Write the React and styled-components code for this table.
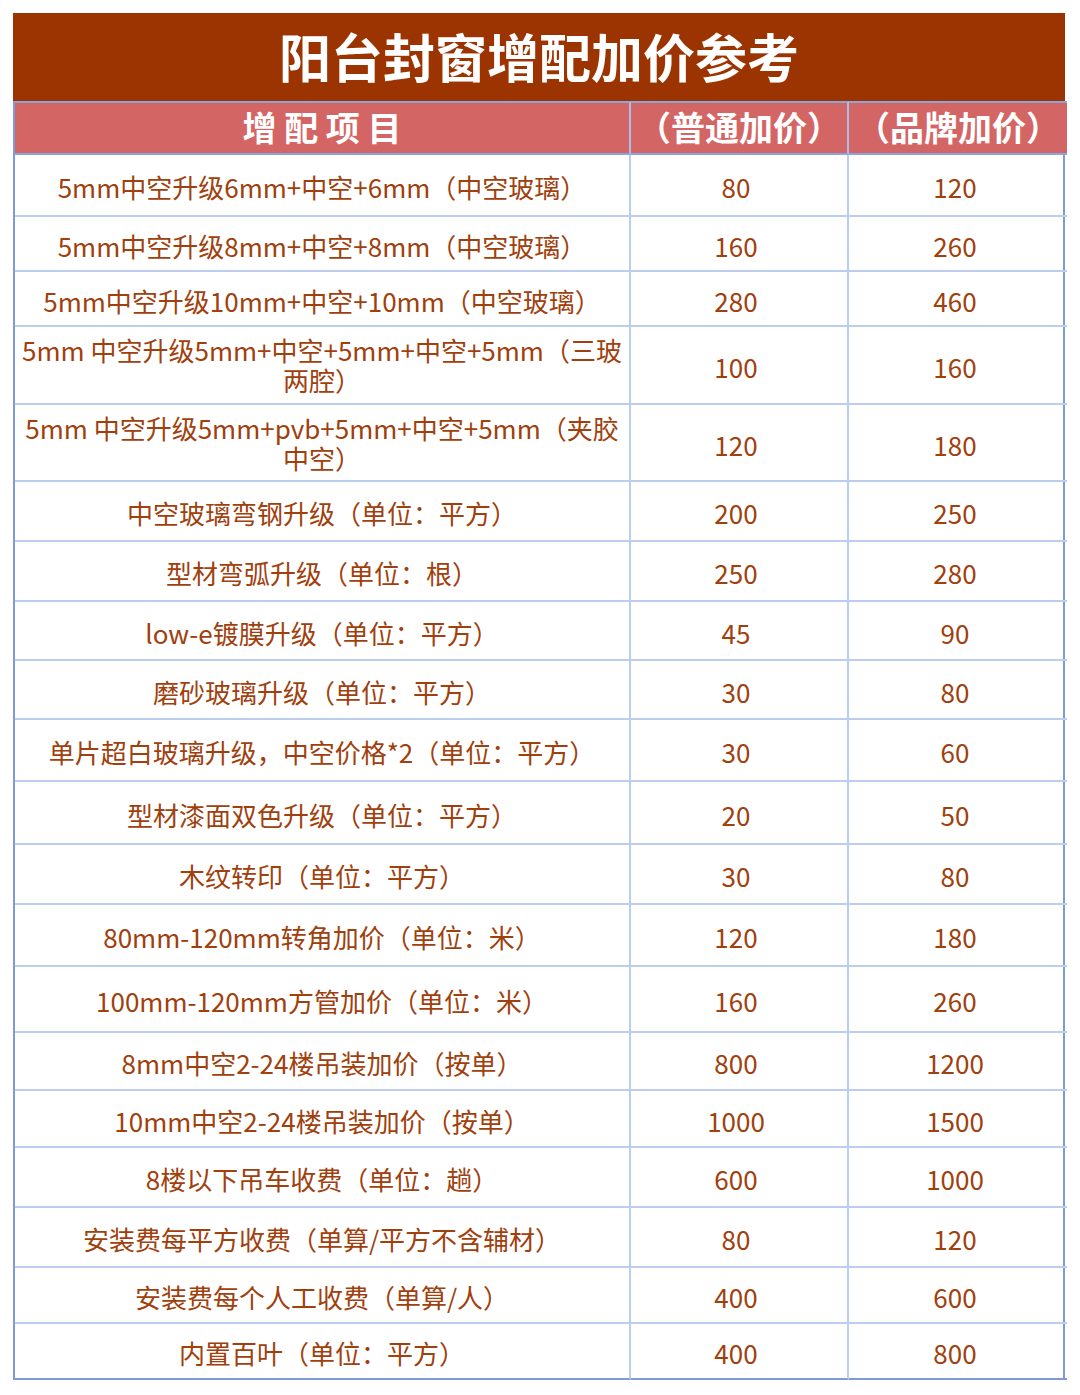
import styled, { createGlobalStyle } from "styled-components"

const GlobalStyle = createGlobalStyle`
    html, body {
        margin: 0;
        padding: 0;
        background: #ffffff;
    }
    body {
        font-family: "Noto Sans CJK SC", "Noto Sans", sans-serif;
    }
`

const rows = [
    { name: "5mm中空升级6mm+中空+6mm（中空玻璃）", a: "80", b: "120", h: 62 },
    { name: "5mm中空升级8mm+中空+8mm（中空玻璃）", a: "160", b: "260", h: 55 },
    { name: "5mm中空升级10mm+中空+10mm（中空玻璃）", a: "280", b: "460", h: 55 },
    { name: ["5mm 中空升级5mm+中空+5mm+中空+5mm（三玻", "两腔）"], a: "100", b: "160", h: 78 },
    { name: ["5mm 中空升级5mm+pvb+5mm+中空+5mm（夹胶", "中空）"], a: "120", b: "180", h: 77 },
    { name: "中空玻璃弯钢升级（单位：平方）", a: "200", b: "250", h: 60 },
    { name: "型材弯弧升级（单位：根）", a: "250", b: "280", h: 60 },
    { name: "low-e镀膜升级（单位：平方）", a: "45", b: "90", h: 59 },
    { name: "磨砂玻璃升级（单位：平方）", a: "30", b: "80", h: 59 },
    { name: "单片超白玻璃升级，中空价格*2（单位：平方）", a: "30", b: "60", h: 62 },
    { name: "型材漆面双色升级（单位：平方）", a: "20", b: "50", h: 63 },
    { name: "木纹转印（单位：平方）", a: "30", b: "80", h: 60 },
    { name: "80mm-120mm转角加价（单位：米）", a: "120", b: "180", h: 62 },
    { name: "100mm-120mm方管加价（单位：米）", a: "160", b: "260", h: 66 },
    { name: "8mm中空2-24楼吊装加价（按单）", a: "800", b: "1200", h: 58 },
    { name: "10mm中空2-24楼吊装加价（按单）", a: "1000", b: "1500", h: 57 },
    { name: "8楼以下吊车收费（单位：趟）", a: "600", b: "1000", h: 60 },
    { name: "安装费每平方收费（单算/平方不含辅材）", a: "80", b: "120", h: 60 },
    { name: "安装费每个人工收费（单算/人）", a: "400", b: "600", h: 56 },
    { name: "内置百叶（单位：平方）", a: "400", b: "800", h: 56 },
]

const App = () => {
    return (
        <>
            <GlobalStyle />
            <Page>
                <Sheet>
                    <TitleBar>阳台封窗增配加价参考</TitleBar>
                    <Table>
                        <HeadCell>增 配 项 目</HeadCell>
                        <HeadCell>（普通加价）</HeadCell>
                        <HeadCell $last>（品牌加价）</HeadCell>
                        {rows.map((row, index) => {
                            const lastRow = index === rows.length - 1
                            return [
                                <Cell key={index + "n"} $h={row.h} $lastRow={lastRow} $shift={0}>
                                    {Array.isArray(row.name) ? (
                                        <Wrapped>
                                            {row.name[0]}
                                            <br />
                                            {row.name[1]}
                                        </Wrapped>
                                    ) : (
                                        row.name
                                    )}
                                </Cell>,
                                <Cell key={index + "a"} $h={row.h} $lastRow={lastRow} $shift={6}>
                                    {row.a}
                                </Cell>,
                                <Cell key={index + "b"} $h={row.h} $lastRow={lastRow} $shift={6} $last>
                                    {row.b}
                                </Cell>,
                            ]
                        })}
                    </Table>
                </Sheet>
            </Page>
        </>
    )
}

const Page = styled.div`
    width: 1080px;
    height: 1395px;
    padding: 13px 0 0 13px;
    box-sizing: border-box;
`
const Sheet = styled.div`
    width: 1052px;
    display: flex;
    flex-direction: column;
`
const TitleBar = styled.div`
    height: 88px;
    background-color: #9b3400;
    color: #ffffff;
    font-size: 52px;
    font-weight: bold;
    display: flex;
    align-items: center;
    justify-content: center;
    padding-bottom: 4px;
    box-sizing: border-box;
`
const Table = styled.div`
    display: grid;
    grid-template-columns: 616px 218px 218px;
    border-left: 2px solid #7e9bd6;
    border-right: 2px solid #7e9bd6;
    box-sizing: border-box;
`
const HeadCell = styled.div`
    height: 54px;
    background-color: #d46565;
    color: #ffffff;
    font-size: 34px;
    font-weight: bold;
    display: flex;
    align-items: center;
    justify-content: center;
    border-right: ${(p) => (p.$last ? "none" : "2px solid #a8bde8")};
    border-top: 2px solid #8aa5dc;
    border-bottom: 2px solid #8aa5dc;
    box-sizing: border-box;
    white-space: nowrap;
    padding-bottom: 3px;
`
const Cell = styled.div`
    height: ${(p) => p.$h}px;
    display: flex;
    align-items: center;
    justify-content: center;
    text-align: center;
    color: #a0400d;
    font-size: 26px;
    border-right: ${(p) => (p.$last ? "none" : "2px solid #bccdef")};
    border-bottom: 2px solid ${(p) => (p.$lastRow ? "#7e9bd6" : "#bccdef")};
    box-sizing: border-box;
    white-space: nowrap;
    padding-top: 3px;
    padding-right: ${(p) => p.$shift}px;
`
const Wrapped = styled.div`
    line-height: 30px;
    padding-bottom: 3px;
`

export default App
